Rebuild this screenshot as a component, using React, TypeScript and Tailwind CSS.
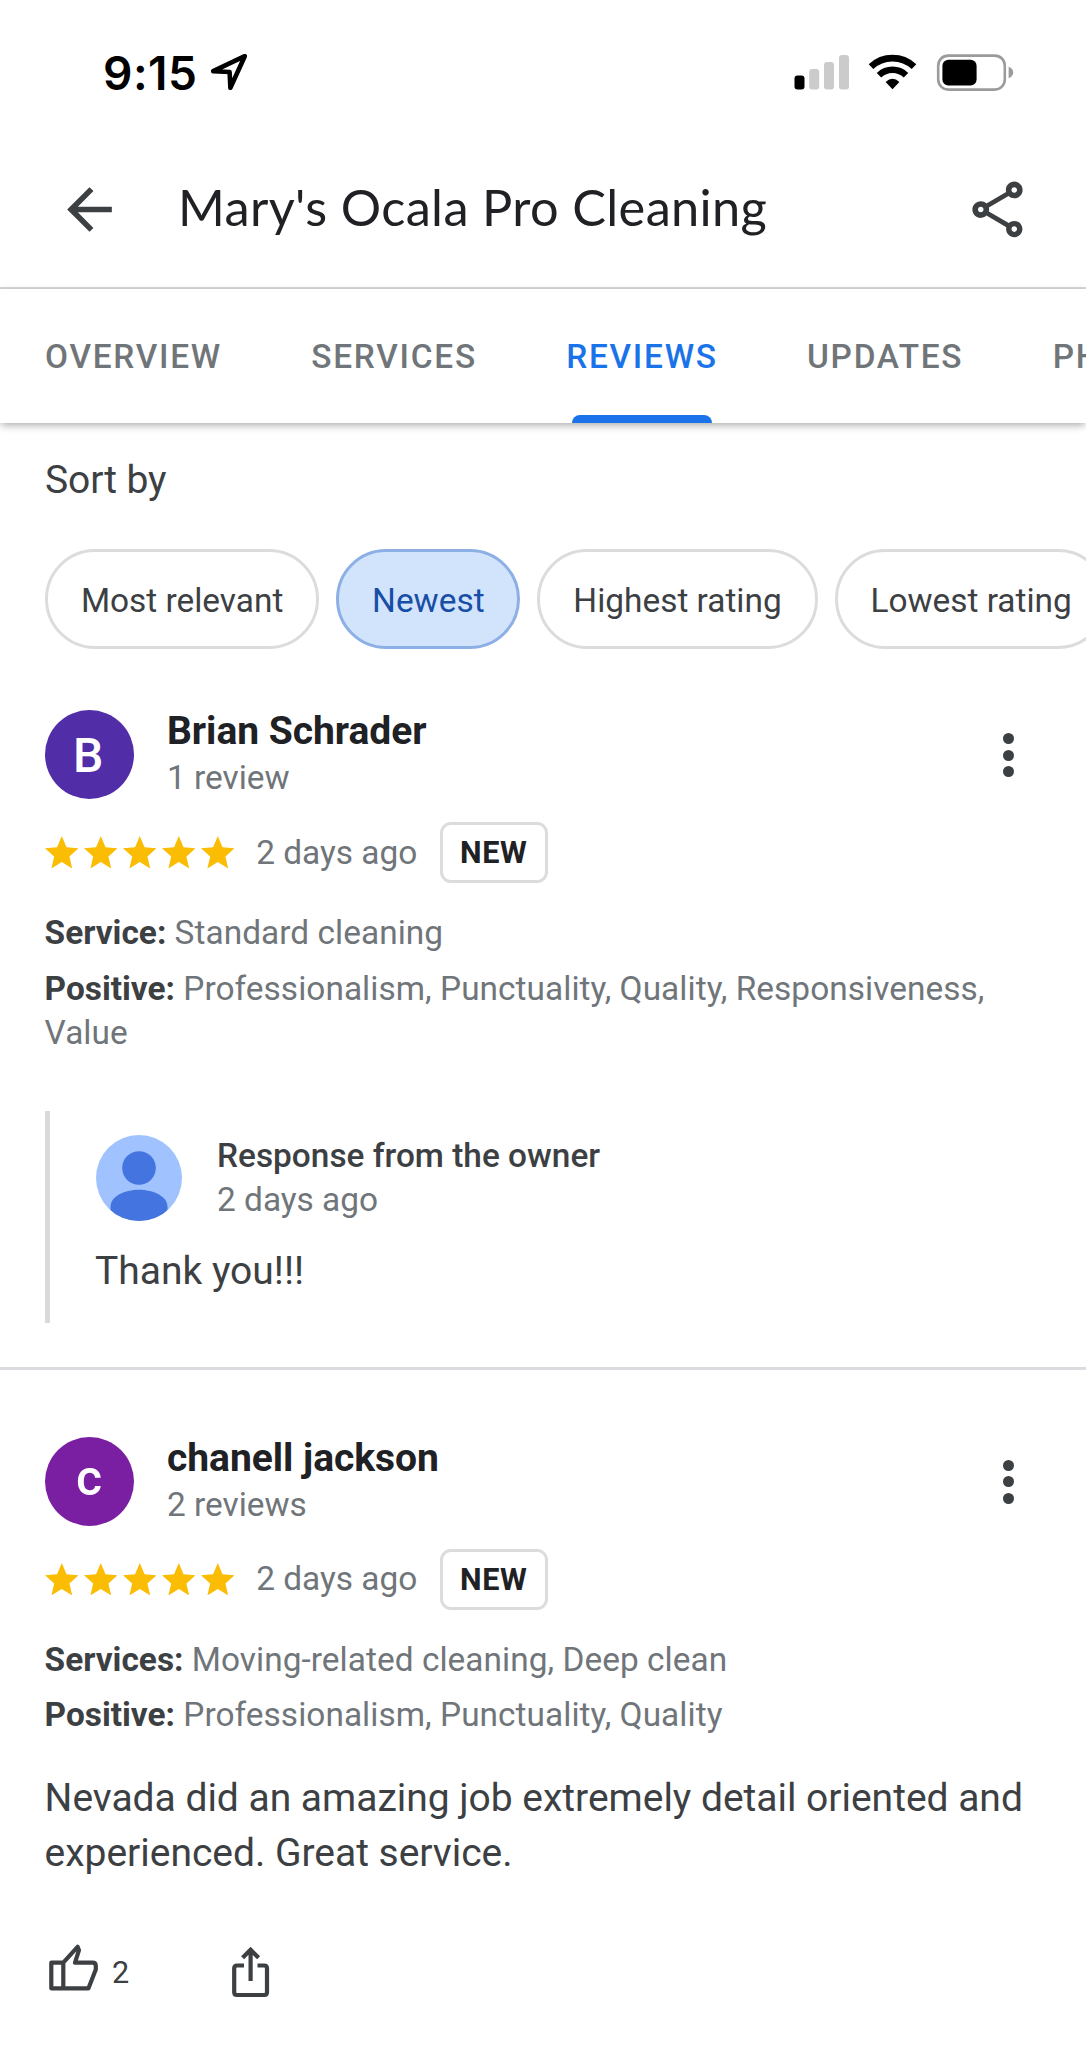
// Business profile - reviews tab (mobile)
import { useState } from 'react';
import clsx from 'clsx';

type Detail = { label: string; value: string };

type Review = {
  id: number;
  name: string;
  initial: string;
  avatarClass: string;
  count: string;
  date: string;
  details: Detail[];
  text?: string;
  likes?: number;
  response?: { date: string; text: string };
};

const TABS = ['OVERVIEW', 'SERVICES', 'REVIEWS', 'UPDATES', 'PHOTOS'];
const SORTS = ['Most relevant', 'Newest', 'Highest rating', 'Lowest rating'];

const REVIEWS: Review[] = [
  {
    id: 1,
    name: 'Brian Schrader',
    initial: 'B',
    avatarClass: 'bg-[#512da8] text-[48px] font-medium pr-[2px] pt-[2px]',
    count: '1 review',
    date: '2 days ago',
    details: [
      { label: 'Service:', value: 'Standard cleaning' },
      { label: 'Positive:', value: 'Professionalism, Punctuality, Quality, Responsiveness, Value' },
    ],
    response: { date: '2 days ago', text: 'Thank you!!!' },
  },
  {
    id: 2,
    name: 'chanell jackson',
    initial: 'c',
    avatarClass: 'bg-[#7b1fa2] text-[50px] font-medium pb-[7px]',
    count: '2 reviews',
    date: '2 days ago',
    details: [
      { label: 'Services:', value: 'Moving-related cleaning, Deep clean' },
      { label: 'Positive:', value: 'Professionalism, Punctuality, Quality' },
    ],
    text: 'Nevada did an amazing job extremely detail oriented and experienced. Great service.',
    likes: 2,
  },
];

const StatusBar = () => (
  <div className="flex h-[144px] items-center pl-[103px] pr-[72px] text-black">
    <span className="pt-[1px] font-[Inter] text-[46px] font-semibold leading-none tracking-[0.5px]">9:15</span>
    <svg className="ml-[12.5px] h-[38px] w-[38px]" viewBox="0 0 38 38" fill="none" stroke="currentColor" strokeWidth="4.6" strokeLinejoin="round">
      <path d="M34.8 3.2 3.2 18.2 19.6 19 20.4 34.8Z" />
    </svg>
    <div className="ml-auto flex items-center">
      <svg className="h-[35px] w-[56px]" viewBox="0 0 56 35">
        <rect x="0.5" y="20.5" width="10" height="14" rx="3" fill="#000" />
        <rect x="15.2" y="14" width="10" height="20.5" rx="3" fill="#cbcbcb" />
        <rect x="30" y="7" width="10" height="27.5" rx="3" fill="#cbcbcb" />
        <rect x="45" y="0" width="10" height="34.5" rx="3" fill="#cbcbcb" />
      </svg>
      <svg className="ml-[18px] h-[36px] w-[49px]" viewBox="0 0 49 36" fill="none" stroke="#000">
        <path d="M3 12.6A31.4 31.4 0 0 1 46 12.6" strokeWidth="6.6" />
        <path d="M11 21.2A19.6 19.6 0 0 1 38 21.2" strokeWidth="6.4" />
        <path d="M17.6 28Q24.5 21.6 31.4 28L24.5 35.2Z" fill="#000" stroke="none" />
      </svg>
      <svg className="ml-[19px] h-[37px] w-[78px]" viewBox="0 0 78 37">
        <rect x="2.2" y="1.6" width="66.6" height="34" rx="10" fill="none" stroke="#9b9b9b" strokeWidth="2.6" />
        <rect x="6.4" y="5.8" width="34.2" height="25.6" rx="6" fill="#000" />
        <path d="M72.6 12.8q4.6 1.8 4.6 5.7t-4.6 5.7z" fill="#9b9b9b" />
      </svg>
    </div>
  </div>
);

const Header = () => (
  <header className="flex h-[145px] items-center border-b-2 border-[#d5d6d8] pb-[13px] pl-[56px] pr-[55.5px] text-[#3c4043]">
    <svg className="size-[67px]" viewBox="0 0 24 24" fill="currentColor">
      <path d="M20 11H7.83l5.59-5.59L12 4l-8 8 8 8 1.41-1.41L7.83 13H20z" />
    </svg>
    <h1 className="ml-[55px] whitespace-nowrap pb-[4px] font-[Lato] text-[50.5px] leading-[60px] tracking-[0.35px] text-[#202124]">
      Mary's Ocala Pro Cleaning
    </h1>
    <svg className="ml-auto size-[67px]" viewBox="0 0 24 24" fill="currentColor">
      <path d="M18 16.08c-.76 0-1.44.3-1.96.77L8.91 12.7c.05-.23.09-.46.09-.7s-.04-.47-.09-.7l7.05-4.11c.54.5 1.25.81 2.04.81 1.66 0 3-1.34 3-3s-1.34-3-3-3-3 1.34-3 3c0 .24.04.47.09.7L8.04 9.81C7.5 9.31 6.79 9 6 9c-1.66 0-3 1.34-3 3s1.34 3 3 3c.79 0 1.5-.31 2.04-.81l7.12 4.16c-.05.21-.08.43-.08.65 0 1.61 1.31 2.92 2.92 2.92s2.92-1.31 2.92-2.92-1.31-2.92-2.92-2.92zM18 4c.55 0 1 .45 1 1s-.45 1-1 1-1-.45-1-1 .45-1 1-1zM6 13c-.55 0-1-.45-1-1s.45-1 1-1 1 .45 1 1-.45 1-1 1zm12 7.02c-.55 0-1-.45-1-1s.45-1 1-1 1 .45 1 1-.45 1-1 1z" />
    </svg>
  </header>
);

const Stars = () => (
  <div className="flex gap-[5.4px]">
    {[0, 1, 2, 3, 4].map((i) => (
      <svg key={i} className="h-[32.4px] w-[33.6px]" viewBox="2 2 20 19" preserveAspectRatio="none" fill="#fbbc04">
        <path d="M12 17.27 18.18 21l-1.64-7.03L22 9.24l-7.19-.61L12 2 9.19 8.63 2 9.24l5.46 4.73L5.82 21z" />
      </svg>
    ))}
  </div>
);

const OwnerResponse = ({ date, text }: { date: string; text: string }) => (
  <div className="mr-[45px] ml-[45px] mt-[55px] h-[212px] border-l-[5px] border-[#dadada] pl-[46px] pt-[23px]">
    <div className="flex items-center">
      <svg className="size-[86px]" viewBox="0 0 86 86">
        <defs>
          <clipPath id="owner">
            <circle cx="43" cy="43" r="43" />
          </clipPath>
        </defs>
        <g clipPath="url(#owner)">
          <rect width="86" height="86" fill="#a0c3ff" />
          <circle cx="43" cy="33" r="16.8" fill="#4374e0" />
          <path d="M14.5 86V72C14.5 61 29 54.8 43 54.8S71.5 61 71.5 72v14z" fill="#4374e0" />
        </g>
      </svg>
      <div className="ml-[35px] text-[33.4px] leading-[44.5px]">
        <div className="font-medium text-[#3c4043]">Response from the owner</div>
        <div className="text-[#70757a]">{date}</div>
      </div>
    </div>
    <p className="mt-[20px] text-[39px] leading-[56px] text-[#3c4043] -ml-[1px]">{text}</p>
  </div>
);

const ReviewCard = ({ review }: { review: Review }) => (
  <article>
    <div className="flex pl-[44.6px] pr-[72.5px]">
      <div
        className={clsx(
          'mt-[5px] flex size-[89px] items-center justify-center rounded-full leading-none text-white',
          review.avatarClass,
        )}
      >
        {review.initial}
      </div>
      <div className="ml-[33.4px]">
        <div className="text-[39px] font-bold leading-[52px] tracking-[-0.03px] text-[#202124]">{review.name}</div>
        <div className="text-[33.4px] leading-[41px] text-[#70757a]">{review.count}</div>
      </div>
      <button className="ml-auto mt-[28px] flex flex-col gap-[5.7px] self-start">
        <span className="size-[11px] rounded-full bg-[#3c4043]" />
        <span className="size-[11px] rounded-full bg-[#3c4043]" />
        <span className="size-[11px] rounded-full bg-[#3c4043]" />
      </button>
    </div>

    <div className="mt-[23px] flex h-[61px] items-center pl-[44.6px]">
      <Stars />
      <span className="ml-[22px] text-[33.4px] leading-[44px] text-[#70757a]">{review.date}</span>
      <span className="ml-[22.5px] flex h-[61px] w-[108px] items-center justify-center rounded-[11px] border-[3px] border-[#dcdcde] pt-[1px] text-[30.6px] font-bold tracking-[0.6px] text-[#202124]">
        NEW
      </span>
    </div>

    <div className="mt-[28px] flex flex-col gap-[11.2px] pl-[44.6px] pr-[72px] text-[33.4px] leading-[44.5px] text-[#70757a]">
      {review.details.map((d) => (
        <p key={d.label}>
          <b className="font-bold text-[#3c4043]">{d.label}</b>{' '}
          <span className="tracking-[0.05px]">{d.value}</span>
        </p>
      ))}
    </div>

    {review.response && <OwnerResponse {...review.response} />}

    {review.text && (
      <p className="mt-[32.8px] pl-[44.6px] pr-[50px] text-[39px] leading-[55.7px] tracking-[-0.02px] text-[#3c4043]">
        {review.text}
      </p>
    )}

    {review.likes !== undefined && (
      <div className="mt-[58px] flex items-start pl-[46px] text-[#3c4043]">
        <svg className="size-[56px]" viewBox="0 0 56 56" fill="none" stroke="currentColor" strokeWidth="4.2" strokeLinejoin="round">
          <path d="M5.3 22.7H17.3V48.3H5.3ZM17.3 22.7 31.6 6.8 33 10.2 29 22.7H46.5Q49.8 22.7 49.8 26V29.6L42.5 48.3H17.3" />
        </svg>
        <span className="ml-[10px] mt-[15px] text-[30.6px] leading-[36px]">{review.likes}</span>
        <svg className="ml-[103px] mt-[6px] h-[52px] w-[38px]" viewBox="0 0 38 52" fill="none" stroke="currentColor" strokeWidth="4.2">
          <path d="M12 19.5H5Q2.2 19.5 2.2 22.3V46.2Q2.2 49 5 49H32.2Q35 49 35 46.2V22.3Q35 19.5 32.2 19.5H25.5M18.6 35V3.5M10.6 11.8 18.6 3.8 26.6 11.8" />
        </svg>
      </div>
    )}
  </article>
);

export default function App() {
  const [tab, setTab] = useState('REVIEWS');
  const [sort, setSort] = useState('Newest');

  return (
    <div className="h-[2048px] w-[1086px] overflow-hidden bg-white font-[Roboto,sans-serif]">
      <StatusBar />
      <Header />

      {/* Tabs */}
      <nav className="flex h-[134px] pl-[45px] shadow-[0_3px_8px_-1px_rgba(0,0,0,0.35)]">
        {TABS.map((t) => (
          <button
            key={t}
            onClick={() => setTab(t)}
            className={clsx(
              'mr-[89.3px] flex shrink-0 flex-col items-center text-[33.4px] font-medium tracking-[1.74px]',
              tab === t ? 'text-[#1a73e8]' : 'text-[#70757a]',
            )}
          >
            <span className="mt-[44px] h-[82px] leading-[47px]">{t}</span>
            {tab === t && <span className="h-[8px] w-[140px] rounded-t-[8px] bg-[#1a73e8]" />}
          </button>
        ))}
      </nav>

      {/* Sort chips */}
      <div className="pl-[45px] pt-[29px]">
        <div className="text-[39px] leading-[56px] tracking-[-0.1px] text-[#3c4043]">Sort by</div>
        <div className="mt-[41px] flex gap-[17px]">
          {SORTS.map((s) => (
            <button
              key={s}
              onClick={() => setSort(s)}
              className={clsx(
                'h-[100px] shrink-0 rounded-full border-[3px] px-[32.9px] pt-[4px] text-[33.4px]',
                sort === s ? 'border-[#8cb0e6] bg-[#d2e3fc] text-[#174ea6]' : 'border-[#dcdcde] text-[#3c4043]',
              )}
            >
              {s}
            </button>
          ))}
        </div>
      </div>

      {/* Reviews */}
      <div className="mt-[56px]">
        <ReviewCard review={REVIEWS[0]} />
        <div className="mb-[62px] mt-[44px] h-[3px] bg-[#dadce0]" />
        <ReviewCard review={REVIEWS[1]} />
      </div>
    </div>
  );
}
